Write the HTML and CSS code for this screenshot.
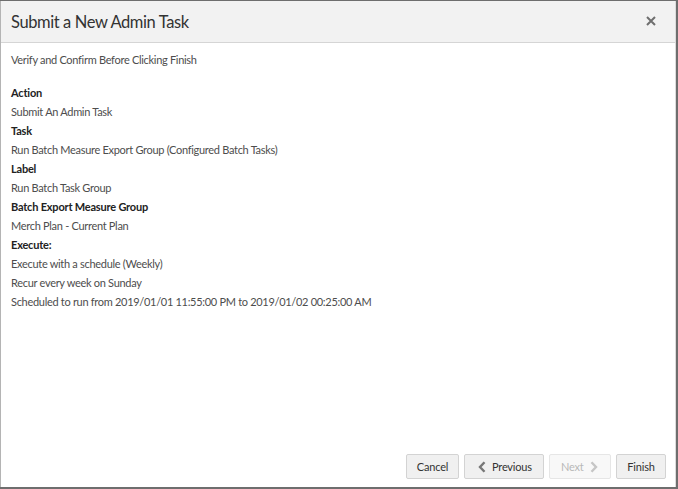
FILE: index.html
```html
<!DOCTYPE html>
<html>
<head>
<meta charset="utf-8">
<link rel="stylesheet" href="styles.css">
</head>
<body>
<div class="dialog">
  <div class="header">
    <div class="title">Submit a New Admin Task</div>
    <div class="close">
      <svg width="10" height="10" viewBox="0 0 10 10"><path d="M1 1L9 9M9 1L1 9" stroke="#6f6f6f" stroke-width="2"/></svg>
    </div>
  </div>
  <div class="body">
    <div class="intro">Verify and Confirm Before Clicking Finish</div>
    <div class="list">
      <div class="label">Action</div>
      <div class="value">Submit An Admin Task</div>
      <div class="label">Task</div>
      <div class="value">Run Batch Measure Export Group (Configured Batch Tasks)</div>
      <div class="label">Label</div>
      <div class="value">Run Batch Task Group</div>
      <div class="label">Batch Export Measure Group</div>
      <div class="value">Merch Plan - Current Plan</div>
      <div class="label">Execute:</div>
      <div class="value">Execute with a schedule (Weekly)</div>
      <div class="value">Recur every week on Sunday</div>
      <div class="value">Scheduled to run from 2019/01/01 11:55:00 PM to 2019/01/02 00:25:00 AM</div>
    </div>
  </div>
  <div class="footer">
    <button class="btn btn-cancel">Cancel</button>
    <button class="btn btn-prev"><svg class="chev" width="8" height="12" viewBox="0 0 8 12"><path d="M6.5 1.2L2 6l4.5 4.8" fill="none" stroke="#777777" stroke-width="2.4"/></svg>Previous</button>
    <button class="btn btn-next" disabled>Next<svg class="chev" width="8" height="12" viewBox="0 0 8 12"><path d="M1.5 1.2L6 6l-4.5 4.8" fill="none" stroke="#c6c6c6" stroke-width="2.4"/></svg></button>
    <button class="btn btn-finish">Finish</button>
  </div>
</div>
</body>
</html>
```

FILE: styles.css
```css
html, body {
  margin: 0;
  padding: 0;
  height: 100%;
}
body {
  background: #6e6e6e;
  font-family: "Lato", "Open Sans", sans-serif;
  color: #4d4d4d;
  overflow: hidden;
}
.dialog {
  margin-top: 1px;
  width: 674px;
  height: 486px;
  background: #ffffff;
  border-left: 1px solid #b4b4b4;
  border-right: 1px solid #dcdcdc;
  display: flex;
  flex-direction: column;
}
.header {
  height: 41px;
  background: #f2f2f2;
  border-bottom: 1px solid #d5d5d5;
  display: flex;
  align-items: center;
  justify-content: space-between;
  padding: 0 19px 0 10px;
}
.title {
  font-size: 16.5px;
  letter-spacing: -0.4px;
  color: #333333;
  padding-top: 1px;
}
.close {
  display: flex;
  align-items: center;
  padding-bottom: 1px;
}
.body {
  flex: 1;
  padding: 7px 10px 0 10px;
  font-size: 11px;
  letter-spacing: -0.3px;
}
.intro {
  line-height: 20px;
  margin-bottom: 13px;
}
.list {
  line-height: 19px;
}
.label {
  font-weight: bold;
  color: #222222;
  letter-spacing: -0.2px;
}
.footer {
  display: flex;
  justify-content: flex-end;
  gap: 5px;
  padding: 0 9px 8px 0;
}
.btn {
  height: 25px;
  font-family: inherit;
  font-size: 11px;
  letter-spacing: -0.2px;
  color: #333333;
  background: #f0f0f0;
  border: 1px solid #d3d3d3;
  border-radius: 2px;
  padding: 0;
  display: flex;
  align-items: center;
  gap: 6px;
  flex: none;
}
.btn-cancel { width: 53px; justify-content: center; }
.btn-prev { width: 80px; padding-left: 13px; }
.btn-next { width: 62px; color: #b8b8b8; background: #f8f8f8; border-color: #e6e6e6; padding-left: 11px; }
.btn-finish { width: 50px; justify-content: center; }
```
